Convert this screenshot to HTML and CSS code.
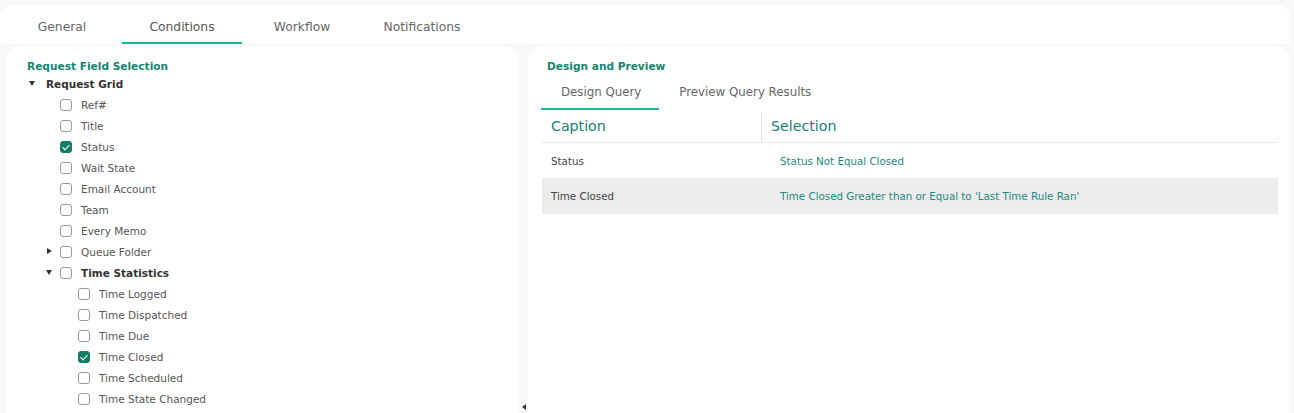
FILE: index.html
```html
<!DOCTYPE html>
<html lang="en">
<head>
    <meta charset="UTF-8">
    <title>Rule Conditions</title>
    <link rel="stylesheet" href="styles.css">
</head>
<body>
    <div class="tabs-card">
        <div class="tab">General</div>
        <div class="tab active">Conditions</div>
        <div class="tab">Workflow</div>
        <div class="tab">Notifications</div>
    </div>
    <div class="workspace">
        <div class="panel left-panel">
            <div class="panel-title">Request Field Selection</div>
            <div class="tree">
                <div class="row level-0"><span class="caret open"></span><span class="label bold">Request Grid</span></div>
                <div class="row level-1"><span class="caret none"></span><span class="check"></span><span class="label">Ref#</span></div>
                <div class="row level-1"><span class="caret none"></span><span class="check"></span><span class="label">Title</span></div>
                <div class="row level-1"><span class="caret none"></span><span class="check checked"></span><span class="label">Status</span></div>
                <div class="row level-1"><span class="caret none"></span><span class="check"></span><span class="label">Wait State</span></div>
                <div class="row level-1"><span class="caret none"></span><span class="check"></span><span class="label">Email Account</span></div>
                <div class="row level-1"><span class="caret none"></span><span class="check"></span><span class="label">Team</span></div>
                <div class="row level-1"><span class="caret none"></span><span class="check"></span><span class="label">Every Memo</span></div>
                <div class="row level-1"><span class="caret closed"></span><span class="check"></span><span class="label">Queue Folder</span></div>
                <div class="row level-1"><span class="caret open"></span><span class="check"></span><span class="label bold">Time Statistics</span></div>
                <div class="row level-2"><span class="caret none"></span><span class="check"></span><span class="label">Time Logged</span></div>
                <div class="row level-2"><span class="caret none"></span><span class="check"></span><span class="label">Time Dispatched</span></div>
                <div class="row level-2"><span class="caret none"></span><span class="check"></span><span class="label">Time Due</span></div>
                <div class="row level-2"><span class="caret none"></span><span class="check checked"></span><span class="label">Time Closed</span></div>
                <div class="row level-2"><span class="caret none"></span><span class="check"></span><span class="label">Time Scheduled</span></div>
                <div class="row level-2"><span class="caret none"></span><span class="check"></span><span class="label">Time State Changed</span></div>
            </div>
        </div>
        <div class="splitter"><span class="collapse"></span></div>
        <div class="panel right-panel">
            <div class="panel-title">Design and Preview</div>
            <div class="sub-tabs">
                <div class="sub-tab active">Design Query</div>
                <div class="sub-tab">Preview Query Results</div>
            </div>
            <div class="grid">
                <div class="grid-head">
                    <div class="cell caption">Caption</div>
                    <div class="cell selection">Selection</div>
                </div>
                <div class="grid-row">
                    <div class="cell caption">Status</div>
                    <div class="cell selection">Status Not Equal Closed</div>
                </div>
                <div class="grid-row shaded">
                    <div class="cell caption">Time Closed</div>
                    <div class="cell selection">Time Closed Greater than or Equal to 'Last Time Rule Ran'</div>
                </div>
            </div>
        </div>
    </div>
</body>
</html>
```

FILE: styles.css
```css
body {
    margin: 0;
    background-color: #f8f8f8;
    font-family: "DejaVu Sans", sans-serif;
    color: #444;
    height: 413px;
    overflow: hidden;
}

.tabs-card {
    display: flex;
    margin: 5px 4px 0 0;
    padding-left: 2px;
    background-color: #fff;
    border-radius: 12px 12px 0 0;
    height: 39px;
}

.tab {
    width: 120px;
    box-sizing: border-box;
    text-align: center;
    font-size: 12.3px;
    color: #666;
    padding-top: 15px;
    border-bottom: 2px solid transparent;
}

.tab.active {
    color: #555;
    border-bottom-color: #1fb597;
}

.workspace {
    display: flex;
    padding: 2px 4px 0 6px;
    height: 367px;
}

.panel {
    background-color: #fff;
    border-radius: 14px 14px 0 0;
    box-sizing: border-box;
}

.left-panel {
    width: 512px;
    padding: 14px 0 0 21px;
}

.splitter {
    width: 10px;
    position: relative;
}

.collapse {
    position: absolute;
    left: 4px;
    bottom: 3px;
    width: 0;
    height: 0;
    border-top: 3px solid transparent;
    border-bottom: 3px solid transparent;
    border-right: 4px solid #333;
}

.right-panel {
    flex: 1;
    padding: 14px 12px 0 13px;
}

.panel-title {
    font-size: 10.6px;
    font-weight: bold;
    color: #14856f;
    height: 13px;
    line-height: 13px;
}

.right-panel .panel-title {
    margin-left: 6px;
}

.row {
    display: flex;
    align-items: center;
    height: 21px;
    font-size: 10.5px;
    color: #555;
}

.row.level-1 {
    margin-left: 17px;
}

.row.level-2 {
    margin-left: 35px;
}

.caret {
    width: 16px;
    height: 21px;
    position: relative;
    flex-shrink: 0;
}

.caret.open::before {
    content: "";
    position: absolute;
    left: 2px;
    top: 8px;
    border-left: 3px solid transparent;
    border-right: 3px solid transparent;
    border-top: 5px solid #333;
}

.caret.closed::before {
    content: "";
    position: absolute;
    left: 3px;
    top: 7px;
    border-top: 3px solid transparent;
    border-bottom: 3px solid transparent;
    border-left: 5px solid #333;
}

.level-0 .label {
    margin-left: 3px;
}

.check {
    width: 12px;
    height: 12px;
    box-sizing: border-box;
    border: 1px solid #9a9a9a;
    border-radius: 3px;
    margin-right: 9px;
    flex-shrink: 0;
    position: relative;
}

.check.checked {
    background-color: #147b64;
    border-color: #147b64;
}

.check.checked::after {
    content: "";
    position: absolute;
    left: 3px;
    top: 1px;
    width: 3px;
    height: 6px;
    border: solid #fff;
    border-width: 0 1.5px 1.5px 0;
    transform: rotate(45deg);
}

.label.bold {
    font-weight: bold;
    color: #333;
}

.sub-tabs {
    display: flex;
    margin-top: 6px;
}

.sub-tab {
    padding: 6px 18px 9px 20px;
    font-size: 11.8px;
    color: #666;
    border-bottom: 2px solid transparent;
}

.sub-tab.active {
    border-bottom-color: #1fb597;
}

.grid {
    margin-left: 1px;
}

.grid-head {
    display: flex;
    height: 32px;
    border-bottom: 1px solid #ebebeb;
    font-size: 14.2px;
    color: #17806f;
}

.grid-head .cell {
    line-height: 32px;
}

.grid-head .selection {
    border-left: 1px solid #e6e6e6;
    margin-top: 2px;
    line-height: 28px;
    padding-bottom: 2px;
}

.cell.caption {
    width: 219px;
    padding-left: 9px;
    box-sizing: border-box;
}

.cell.selection {
    padding-left: 9px;
    flex: 1;
}

.grid-row {
    display: flex;
    align-items: center;
    height: 35px;
    font-size: 10.3px;
}

.grid-row .caption {
    color: #444;
}

.grid-row .selection {
    color: #1d8a82;
    padding-left: 19px;
}

.grid-row.shaded {
    background-color: #ececec;
    height: 36px;
}
```
